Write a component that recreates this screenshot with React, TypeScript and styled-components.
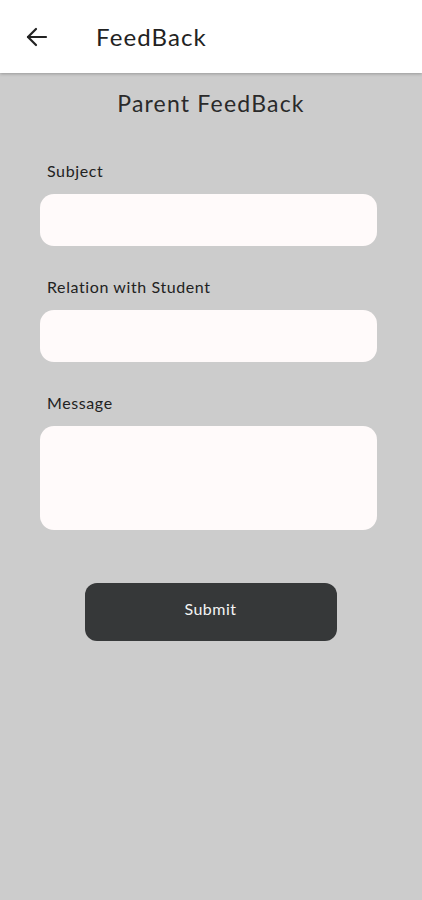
import React from "react";
import styled, { createGlobalStyle } from "styled-components";

const Global = createGlobalStyle`
  html, body { margin: 0; padding: 0; }
  body { background: #cccccc; font-family: "Lato", "Noto Sans", sans-serif; }
  * { box-sizing: border-box; }
`;

const Page = styled.div`
  min-height: 900px;
  background: #cccccc;
  display: flex;
  flex-direction: column;
`;

const Header = styled.header`
  height: 73px;
  background: #ffffff;
  display: flex;
  align-items: center;
  padding-left: 24px;
  box-shadow: 0 1px 3px rgba(0, 0, 0, 0.25);
  position: relative;
  z-index: 1;
`;

const BackButton = styled.button`
  border: none;
  background: none;
  padding: 0;
  width: 26px;
  height: 26px;
  display: flex;
  align-items: center;
  justify-content: center;
  color: #222;
`;

const Title = styled.h1`
  margin: 0 0 0 46px;
  font-size: 24px;
  font-weight: 400;
  color: #222;
  letter-spacing: 1.1px;
`;

const Heading = styled.h2`
  margin: 16px 0 0;
  text-align: center;
  font-size: 23px;
  font-weight: 400;
  color: #2a2a2a;
  letter-spacing: 1.2px;
`;

const Form = styled.form`
  display: flex;
  flex-direction: column;
  padding: 0 45px 0 40px;
  margin-top: 44px;
`;

const Field = styled.div<{ $last?: boolean }>`
  display: flex;
  flex-direction: column;
  margin-bottom: ${(p) => (p.$last ? 0 : 31)}px;
`;

const Label = styled.label`
  font-size: 16px;
  color: #222;
  margin-left: 7px;
  margin-bottom: 13px;
  line-height: 20px;
  letter-spacing: 0.6px;
`;

const Input = styled.input`
  display: block;
  height: 52px;
  border: none;
  border-radius: 14px;
  background: #fffafa;
  outline: none;
`;

const TextArea = styled.textarea`
  display: block;
  height: 104px;
  border: none;
  border-radius: 14px;
  background: #fffafa;
  outline: none;
  resize: none;
`;

const SubmitButton = styled.button`
  align-self: center;
  margin: 53px 0 0 4px;
  width: 252px;
  height: 58px;
  border: none;
  border-radius: 12px;
  background: #363839;
  color: #f4f4f4;
  font-family: "Lato", "Noto Sans", sans-serif;
  font-size: 16px;
  letter-spacing: 0.5px;
  padding-bottom: 8px;
`;

export default function App() {
  return (
    <Page>
      <Global />
      <Header>
        <BackButton aria-label="Back">
          <svg width="24" height="24" viewBox="0 0 24 24" fill="none" stroke="#222" strokeWidth="2.2" strokeLinecap="round" strokeLinejoin="round">
            <path d="M21 12H3" />
            <path d="M11 4l-8 8 8 8" />
          </svg>
        </BackButton>
        <Title>FeedBack</Title>
      </Header>
      <Heading>Parent FeedBack</Heading>
      <Form onSubmit={(e) => e.preventDefault()}>
        <Field>
          <Label>Subject</Label>
          <Input />
        </Field>
        <Field>
          <Label>Relation with Student</Label>
          <Input />
        </Field>
        <Field $last>
          <Label>Message</Label>
          <TextArea />
        </Field>
        <SubmitButton type="submit">Submit</SubmitButton>
      </Form>
    </Page>
  );
}
